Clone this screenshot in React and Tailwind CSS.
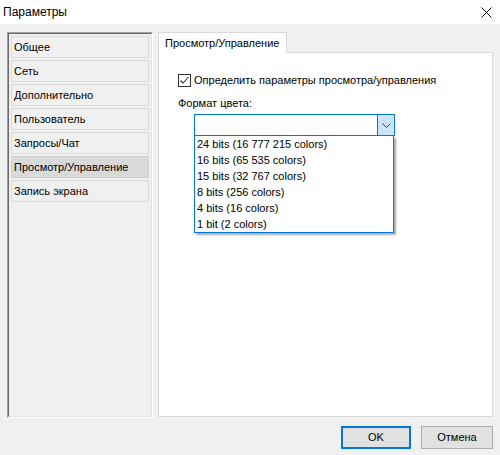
import React from "react";

const items = ["Общее", "Сеть", "Дополнительно", "Пользователь", "Запросы/Чат", "Просмотр/Управление", "Запись экрана"];
const options = ["24 bits (16 777 215 colors)", "16 bits (65 535 colors)", "15 bits (32 767 colors)", "8 bits (256 colors)", "4 bits (16 colors)", "1 bit (2 colors)"];

export default function App() {
  return (
    <div className="w-[500px] h-[455px] bg-[#f0f0f0] flex flex-col text-[11px] text-black leading-none overflow-hidden whitespace-nowrap" style={{ fontFamily: '"Liberation Sans", Arial, sans-serif' }}>
      <div className="h-[24px] bg-white flex items-center justify-between pl-[3px] pr-[7px] shrink-0">
        <span className="text-[12px]">Параметры</span>
        <svg width="11" height="11" viewBox="0 0 11 11" className="mr-[1px]">
          <path d="M0.5 0.5 L10.5 10.5 M10.5 0.5 L0.5 10.5" stroke="#000" strokeWidth="1" fill="none" />
        </svg>
      </div>
      <div className="flex pl-[7px] pt-[8px]">
        <div className="w-[146px] h-[386px] border-t border-l border-[#a0a0a0] border-r-white border-b-white border-r border-b">
          <div className="h-full border-t border-l border-[#696969] border-r border-b border-r-[#e3e3e3] border-b-[#e3e3e3] p-[2px] flex flex-col gap-[2px]">
            {items.map((it, i) => (
              <div key={i} className={`h-[22px] shrink-0 border flex items-center pl-[2px] ${i === 5 ? "bg-[#d9d9d9] border-[#d0d0d0]" : "bg-[#f0f0f0] border-[#dadada]"}`}>
                {it}
              </div>
            ))}
          </div>
        </div>
        <div className="ml-[5px] w-[335px] flex flex-col">
          <div className="h-[21px] flex">
            <div className="w-[129px] h-[21px] bg-white border-t border-l border-r border-[#d9d9d9] flex items-center pl-[6px] relative z-10">
              Просмотр/Управление
            </div>
          </div>
          <div className="-mt-px h-[365px] bg-white border border-[#d9d9d9] pl-[19px] pt-[21px] relative">
            <div className="flex items-center h-[13px]">
              <div className="w-[13px] h-[13px] border border-[#333] flex items-center justify-center bg-white">
                <svg width="11" height="11" viewBox="0 0 11 11">
                  <path d="M1.5 5.5 L4 8 L9.5 2" stroke="#333" strokeWidth="1.1" fill="none" />
                </svg>
              </div>
              <span className="ml-[3px]">Определить параметры просмотра/управления</span>
            </div>
            <div className="mt-[9px] h-[14px] flex items-center">Формат цвета:</div>
            <div className="relative ml-[16px] mt-[4px] w-[201px]">
              <div className="h-[22px] border border-[#0078d7] bg-white flex justify-end">
                <div className="w-[17px] h-full bg-[#cce4f7] border-l border-[#0078d7] flex items-center justify-center">
                  <svg width="9" height="5" viewBox="0 0 9 5">
                    <path d="M0.5 0.5 L4.5 4.5 L8.5 0.5" stroke="#404040" strokeWidth="1" fill="none" />
                  </svg>
                </div>
              </div>
              <div className="absolute left-0 top-[22px] w-[200px] bg-white border border-t-0 border-[#0078d7] shadow-[2px_2px_2px_rgba(0,0,0,0.35)] z-20">
                {options.map((o, i) => (
                  <div key={i} className="h-[16px] flex items-center pl-[2px]">{o}</div>
                ))}
              </div>
            </div>
          </div>
        </div>
      </div>
      <div className="flex justify-end pr-[7px] mt-[8px] gap-[10px]">
        <div className="w-[70px] h-[23px] border-2 border-[#0078d7] bg-[#e1e1e1] flex items-center justify-center">OK</div>
        <div className="w-[72px] h-[23px] border border-[#adadad] bg-[#e1e1e1] flex items-center justify-center">Отмена</div>
      </div>
    </div>
  );
}
